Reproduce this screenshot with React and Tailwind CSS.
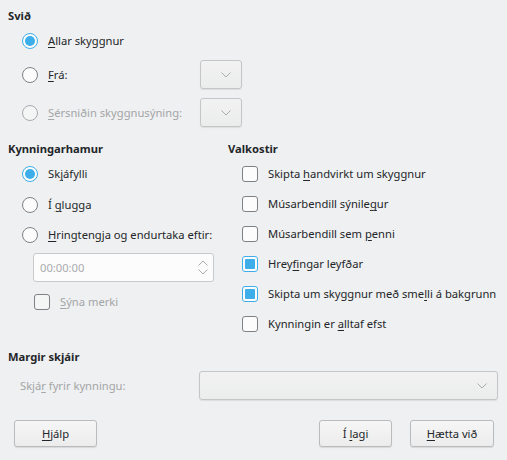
import React from "react";

const U = ({ children }) => <span className="underline underline-offset-2 decoration-1">{children}</span>;

function Radio({ checked, disabled }) {
  return (
    <div
      className={`w-[16px] h-[16px] rounded-full shrink-0 flex items-center justify-center border ${
        checked ? "border-[#3daee9] bg-[#fcfcfc]" : disabled ? "border-[#a9abad] bg-[#f4f5f5]" : "border-[#7f8284] bg-[#fcfcfc]"
      }`}
    >
      {checked && <div className="w-[10px] h-[10px] rounded-full bg-[#3daee9]" />}
    </div>
  );
}

function Check({ checked, disabled }) {
  return (
    <div
      className={`w-[16px] h-[16px] rounded-[3px] shrink-0 flex items-center justify-center border ${
        checked ? "border-[#3daee9] bg-[#fcfcfc]" : disabled ? "border-[#7f8284] bg-[#f4f5f5]" : "border-[#7f8284] bg-[#fcfcfc]"
      }`}
    >
      {checked && <div className="w-[10px] h-[10px] rounded-[1px] bg-[#3daee9]" />}
    </div>
  );
}

function Chevron({ color = "#a9abad" }) {
  return (
    <svg width="10" height="6" viewBox="0 0 10 6" fill="none">
      <path d="M0.5 0.5 L5 5 L9.5 0.5" stroke={color} strokeWidth="1" />
    </svg>
  );
}

function Combo({ className }) {
  return (
    <div
      className={`h-[29px] rounded-[3px] border border-[#c3c5c6] bg-gradient-to-b from-[#f2f2f3] to-[#ebecec] shadow-[0_1px_1px_rgba(0,0,0,0.08)] flex items-center justify-end pr-[10px] ${className}`}
    >
      <Chevron />
    </div>
  );
}

function Button({ children, className }) {
  return (
    <div
      className={`h-[27px] rounded-[3px] border border-[#b9bbbc] bg-gradient-to-b from-[#f6f6f6] to-[#ececed] shadow-[0_1px_1px_rgba(0,0,0,0.1)] flex items-center justify-center text-[#232629] ${className}`}
    >
      {children}
    </div>
  );
}

export default function App() {
  return (
    <div
      className="w-[507px] h-[460px] bg-[#eff0f1] text-[#232629] text-[11.2px] leading-[16px] overflow-hidden"
      style={{ fontFamily: '"Noto Sans", sans-serif' }}
    >
      {/* Svið */}
      <div className="pl-[8px] pt-[8px]">
        <div className="font-bold h-[16px]">Svið</div>
      </div>
      <div className="pl-[22px] mt-[7px] h-[20px] flex items-center">
        <Radio checked />
        <span className="ml-[10px]"><U>A</U>llar skyggnur</span>
      </div>
      <div className="pl-[22px] mt-[9px] h-[29px] flex items-center">
        <Radio />
        <span className="ml-[10px] w-[152px]"><U>F</U>rá:</span>
        <Combo className="w-[42px]" />
      </div>
      <div className="pl-[22px] mt-[9px] h-[29px] flex items-center">
        <Radio disabled />
        <span className="ml-[10px] w-[152px] text-[#a3a5a7]"><U>S</U>érsniðin skyggnusýning:</span>
        <Combo className="w-[42px]" />
      </div>

      {/* Two columns */}
      <div className="flex mt-[14px]">
        <div className="w-[228px] pl-[8px]">
          <div className="font-bold h-[16px]">Kynningarhamur</div>
          <div className="pl-[14px] mt-[7px] h-[20px] flex items-center">
            <Radio checked />
            <span className="ml-[10px]">Sk<U>j</U>áfylli</span>
          </div>
          <div className="pl-[14px] mt-[11px] h-[20px] flex items-center">
            <Radio />
            <span className="ml-[10px]">Í <U>g</U>lugga</span>
          </div>
          <div className="pl-[14px] mt-[10px] h-[20px] flex items-center">
            <Radio />
            <span className="ml-[10px]"><U>H</U>ringtengja og endurtaka eftir:</span>
          </div>
          <div className="ml-[25px] mt-[8px] w-[181px] h-[29px] rounded-[3px] border border-[#c7c9ca] bg-[#fcfcfc] flex items-center justify-between pl-[6px] pr-[5px]">
            <span className="text-[#a9abad]">00:00:00</span>
            <div className="flex flex-col gap-[3px]">
              <svg width="10" height="6" viewBox="0 0 10 6" fill="none">
                <path d="M0.5 5.5 L5 1 L9.5 5.5" stroke="#a9abad" strokeWidth="1" />
              </svg>
              <Chevron />
            </div>
          </div>
          <div className="ml-[26px] mt-[10px] h-[20px] flex items-center">
            <Check disabled />
            <span className="ml-[10px] text-[#a3a5a7]"><U>S</U>ýna merki</span>
          </div>
        </div>

        <div>
          <div className="font-bold h-[16px]">Valkostir</div>
          <div className="pl-[14px] mt-[7px] flex flex-col gap-[10px]">
            <div className="h-[20px] flex items-center">
              <Check />
              <span className="ml-[10px]">Skipta <U>h</U>andvirkt um skyggnur</span>
            </div>
            <div className="h-[20px] flex items-center">
              <Check />
              <span className="ml-[10px]">Músarbendill sýnile<U>g</U>ur</span>
            </div>
            <div className="h-[20px] flex items-center">
              <Check />
              <span className="ml-[10px]">Músarbendill sem <U>p</U>enni</span>
            </div>
            <div className="h-[20px] flex items-center">
              <Check checked />
              <span className="ml-[10px]">Hrey<U>fi</U>ngar leyfðar</span>
            </div>
            <div className="h-[20px] flex items-center">
              <Check checked />
              <span className="ml-[10px] whitespace-nowrap">Skipta um skyggnur með sme<U>l</U>li á bakgrunn</span>
            </div>
            <div className="h-[20px] flex items-center">
              <Check />
              <span className="ml-[10px]">Kynningin er <U>a</U>lltaf efst</span>
            </div>
          </div>
        </div>
      </div>

      {/* Margir skjáir */}
      <div className="pl-[8px] mt-[15px]">
        <div className="font-bold h-[16px]">Margir skjáir</div>
      </div>
      <div className="mt-[6px] flex items-center h-[29px]">
        <span className="pl-[20px] w-[199px] text-[#a3a5a7]">Skjá<U>r</U> fyrir kynningu:</span>
        <Combo className="w-[299px]" />
      </div>

      {/* Buttons */}
      <div className="mt-[20px] flex items-center">
        <Button className="ml-[14px] w-[83px]"><span><U>H</U>jálp</span></Button>
        <div className="flex-1" />
        <Button className="w-[73px]"><span>Í <U>l</U>agi</span></Button>
        <Button className="ml-[18px] w-[84px] mr-[13px]"><span><U>H</U>ætta við</span></Button>
      </div>
    </div>
  );
}
